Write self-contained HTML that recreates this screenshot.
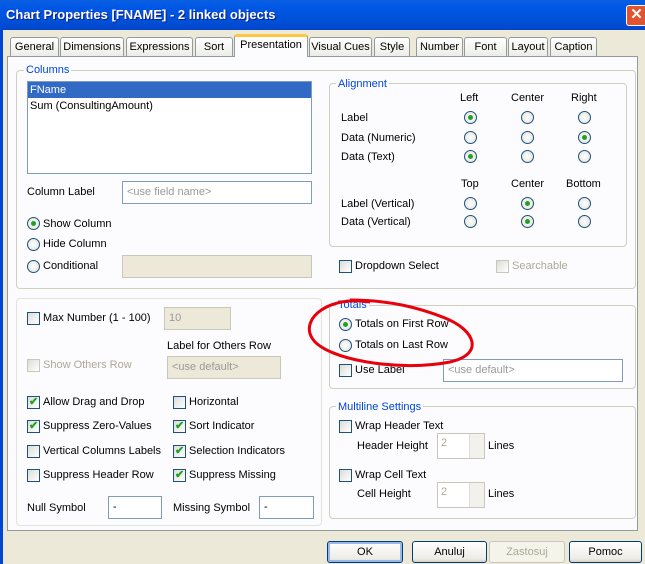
<!DOCTYPE html><html><head><style>
*{box-sizing:border-box}body{margin:0;width:645px;height:564px;overflow:hidden;background:#ECE9D8;font:11px "Liberation Sans",sans-serif;color:#000;position:relative}
.a{position:absolute;white-space:nowrap}
.title{left:0;top:0;width:645px;height:30px;background:linear-gradient(#0A5FE0,#0058E6 20%,#0050D8 70%,#0346C9);}
.tab{position:absolute;top:37px;height:20px;border:1px solid #919B9C;border-bottom:none;border-radius:3px 3px 0 0;background:linear-gradient(#fff,#ECEBE6);text-align:center;line-height:18px}
.panel{left:7px;top:56px;width:631px;height:475px;background:#FCFCFE;border:1px solid #919B9C}
.gb{position:absolute;border:1px solid #D0D0BF;border-radius:4px}
.lg{position:absolute;color:#0046D5;background:#FCFCFE;padding:0 2px;line-height:12px}
.inp{position:absolute;border:1px solid #7F9DB9;background:#fff;color:#999;padding:3px 4px;line-height:14px}
.dis{background:#ECE9D8;border-color:#C9C7BA}
.r{position:absolute;width:13px;height:13px;border:1px solid #1C5180;border-radius:50%;background:radial-gradient(#fff,#E0DFD8)}
.r.c::after{content:"";position:absolute;left:3px;top:3px;width:5px;height:5px;border-radius:50%;background:#21A121}
.k{position:absolute;width:13px;height:13px;border:1px solid #1C5180;background:linear-gradient(135deg,#DCDCD7,#fff)}
.k.c::after{content:"✔";position:absolute;left:1px;top:-2px;color:#21A121;font-size:11px;font-weight:bold}
.k.d{border-color:#CAC8BB}
.g{color:#ACA899}
.btn{position:absolute;top:541px;height:22px;border:1px solid #003C74;border-radius:3px;background:linear-gradient(#fff,#ECEBE6 85%,#D6D0C5);text-align:center;line-height:20px}
.sp{position:absolute;border:1px solid #C9C7BA;background:#fff;color:#ACA899;padding:3px 3px}
.sp i{position:absolute;right:0;top:0;width:15px;height:100%;background:#F2F1EC;border-left:1px solid #DDD}
</style></head><body>
<div class="a title"></div>
<div class="a" style="left:6px;top:7px;color:#fff;font-weight:bold;font-size:13px;text-shadow:1px 1px #0A1E8C">Chart Properties [FNAME] - 2 linked objects</div>
<div class="a" style="left:626px;top:5px;width:21px;height:21px;background:#E3532F;border:1px solid #fff;border-radius:3px;color:#fff;font-weight:bold;font-size:15px;line-height:18px;text-align:center">✕</div>
<div class="a" style="left:0;top:30px;width:3px;height:534px;background:#0046D5"></div>

<div class="tab" style="left:10px;width:49px">General</div>
<div class="tab" style="left:60px;width:64px">Dimensions</div>
<div class="tab" style="left:126px;width:67px">Expressions</div>
<div class="tab" style="left:195px;width:38px">Sort</div>
<div class="tab" style="left:309px;width:63px">Visual Cues</div>
<div class="tab" style="left:374px;width:36px">Style</div>
<div class="tab" style="left:416px;width:47px">Number</div>
<div class="tab" style="left:464px;width:43px">Font</div>
<div class="tab" style="left:508px;width:40px">Layout</div>
<div class="tab" style="left:550px;width:47px">Caption</div>
<div class="a panel"></div>
<div class="tab" style="left:234px;top:34px;width:74px;height:23px;background:#FCFCFE;border-top:3px solid #FFC83C;border-bottom:none;line-height:16px;z-index:2">Presentation</div>

<div class="gb" style="left:16px;top:70px;width:620px;height:219px"></div>
<div class="lg" style="left:24px;top:64px">Columns</div>
<div class="a" style="left:27px;top:81px;width:285px;height:93px;border:1px solid #7F9DB9;background:#fff"></div>
<div class="a" style="left:28px;top:82px;width:283px;height:16px;background:#316AC5;color:#fff;padding-left:2px;line-height:16px">FName</div>
<div class="a" style="left:30px;top:100px">Sum (ConsultingAmount)</div>
<div class="a" style="left:27px;top:186px">Column Label</div>
<div class="inp" style="left:122px;top:181px;width:190px;height:23px">&lt;use field name&gt;</div>
<div class="r c" style="left:27px;top:217px"></div><div class="a" style="left:43px;top:218px">Show Column</div>
<div class="r" style="left:27px;top:238px"></div><div class="a" style="left:43px;top:238px">Hide Column</div>
<div class="r" style="left:27px;top:260px"></div><div class="a" style="left:43px;top:260px">Conditional</div>
<div class="inp dis" style="left:122px;top:255px;width:190px;height:23px"></div>

<div class="gb" style="left:329px;top:83px;width:298px;height:164px"></div>
<div class="lg" style="left:336px;top:78px">Alignment</div>
<div class="a" style="left:460px;top:92px">Left</div><div class="a" style="left:511px;top:92px">Center</div><div class="a" style="left:571px;top:92px">Right</div>
<div class="a" style="left:341px;top:112px">Label</div><div class="a" style="left:341px;top:132px">Data (Numeric)</div><div class="a" style="left:341px;top:151px">Data (Text)</div>
<div class="r c" style="left:464px;top:111px"></div><div class="r" style="left:521px;top:111px"></div><div class="r" style="left:578px;top:111px"></div>
<div class="r" style="left:464px;top:131px"></div><div class="r" style="left:521px;top:131px"></div><div class="r c" style="left:578px;top:131px"></div>
<div class="r c" style="left:464px;top:150px"></div><div class="r" style="left:521px;top:150px"></div><div class="r" style="left:578px;top:150px"></div>
<div class="a" style="left:461px;top:178px">Top</div><div class="a" style="left:511px;top:178px">Center</div><div class="a" style="left:566px;top:178px">Bottom</div>
<div class="a" style="left:341px;top:198px">Label (Vertical)</div><div class="a" style="left:341px;top:216px">Data (Vertical)</div>
<div class="r" style="left:464px;top:197px"></div><div class="r c" style="left:521px;top:197px"></div><div class="r" style="left:578px;top:197px"></div>
<div class="r" style="left:464px;top:215px"></div><div class="r c" style="left:521px;top:215px"></div><div class="r" style="left:578px;top:215px"></div>
<div class="k" style="left:339px;top:260px"></div><div class="a" style="left:355px;top:260px">Dropdown Select</div>
<div class="k d" style="left:496px;top:260px"></div><div class="a g" style="left:512px;top:260px">Searchable</div>

<div class="gb" style="left:16px;top:298px;width:306px;height:228px;border-color:#E4E3DA"></div>
<div class="k" style="left:27px;top:312px"></div><div class="a" style="left:43px;top:312px">Max Number (1 - 100)</div>
<div class="inp dis" style="left:164px;top:307px;width:67px;height:23px">10</div>
<div class="k d" style="left:27px;top:359px"></div><div class="a g" style="left:43px;top:359px">Show Others Row</div>
<div class="a" style="left:167px;top:340px">Label for Others Row</div>
<div class="inp dis" style="left:167px;top:356px;width:114px;height:23px">&lt;use default&gt;</div>
<div class="k c" style="left:27px;top:396px"></div><div class="a" style="left:43px;top:396px">Allow Drag and Drop</div>
<div class="k" style="left:173px;top:396px"></div><div class="a" style="left:189px;top:396px">Horizontal</div>
<div class="k c" style="left:27px;top:420px"></div><div class="a" style="left:43px;top:420px">Suppress Zero-Values</div>
<div class="k c" style="left:173px;top:420px"></div><div class="a" style="left:189px;top:420px">Sort Indicator</div>
<div class="k" style="left:27px;top:445px"></div><div class="a" style="left:43px;top:445px">Vertical Columns Labels</div>
<div class="k c" style="left:173px;top:445px"></div><div class="a" style="left:189px;top:445px">Selection Indicators</div>
<div class="k" style="left:27px;top:469px"></div><div class="a" style="left:43px;top:469px">Suppress Header Row</div>
<div class="k c" style="left:173px;top:469px"></div><div class="a" style="left:189px;top:469px">Suppress Missing</div>
<div class="a" style="left:27px;top:502px">Null Symbol</div>
<div class="inp" style="left:108px;top:496px;width:54px;height:23px;color:#000">-</div>
<div class="a" style="left:173px;top:502px">Missing Symbol</div>
<div class="inp" style="left:259px;top:496px;width:55px;height:23px;color:#000">-</div>

<div class="gb" style="left:329px;top:305px;width:307px;height:84px"></div>
<div class="lg" style="left:336px;top:299px">Totals</div>
<div class="r c" style="left:339px;top:318px"></div><div class="a" style="left:355px;top:318px">Totals on First Row</div>
<div class="r" style="left:339px;top:339px"></div><div class="a" style="left:355px;top:339px">Totals on Last Row</div>
<div class="k" style="left:339px;top:364px"></div><div class="a" style="left:355px;top:364px">Use Label</div>
<div class="inp" style="left:443px;top:359px;width:180px;height:23px">&lt;use default&gt;</div>

<div class="gb" style="left:329px;top:406px;width:307px;height:113px"></div>
<div class="lg" style="left:336px;top:401px">Multiline Settings</div>
<div class="k" style="left:339px;top:420px"></div><div class="a" style="left:355px;top:420px">Wrap Header Text</div>
<div class="a" style="left:357px;top:440px">Header Height</div>
<div class="sp" style="left:437px;top:433px;width:48px;height:26px">2<i></i></div><div class="a" style="left:488px;top:440px">Lines</div>
<div class="k" style="left:339px;top:469px"></div><div class="a" style="left:355px;top:469px">Wrap Cell Text</div>
<div class="a" style="left:357px;top:488px">Cell Height</div>
<div class="sp" style="left:437px;top:482px;width:48px;height:26px">2<i></i></div><div class="a" style="left:488px;top:488px">Lines</div>

<svg class="a" style="left:0;top:0" width="645" height="564"><path d="M370 302 C330 295 300 318 312 338 C325 360 400 372 450 362 C485 354 475 330 445 318 C420 308 390 300 350 300" fill="none" stroke="#E8000B" stroke-width="3"/></svg>

<div class="btn" style="left:327px;width:76px;border-color:#003C74;box-shadow:inset 0 0 0 2px #98B8EA">OK</div>
<div class="btn" style="left:412px;width:75px">Anuluj</div>
<div class="btn g" style="left:489px;width:76px;border-color:#C9C7BA;background:#F5F4EA">Zastosuj</div>
<div class="btn" style="left:569px;width:73px">Pomoc</div>
</body></html>
